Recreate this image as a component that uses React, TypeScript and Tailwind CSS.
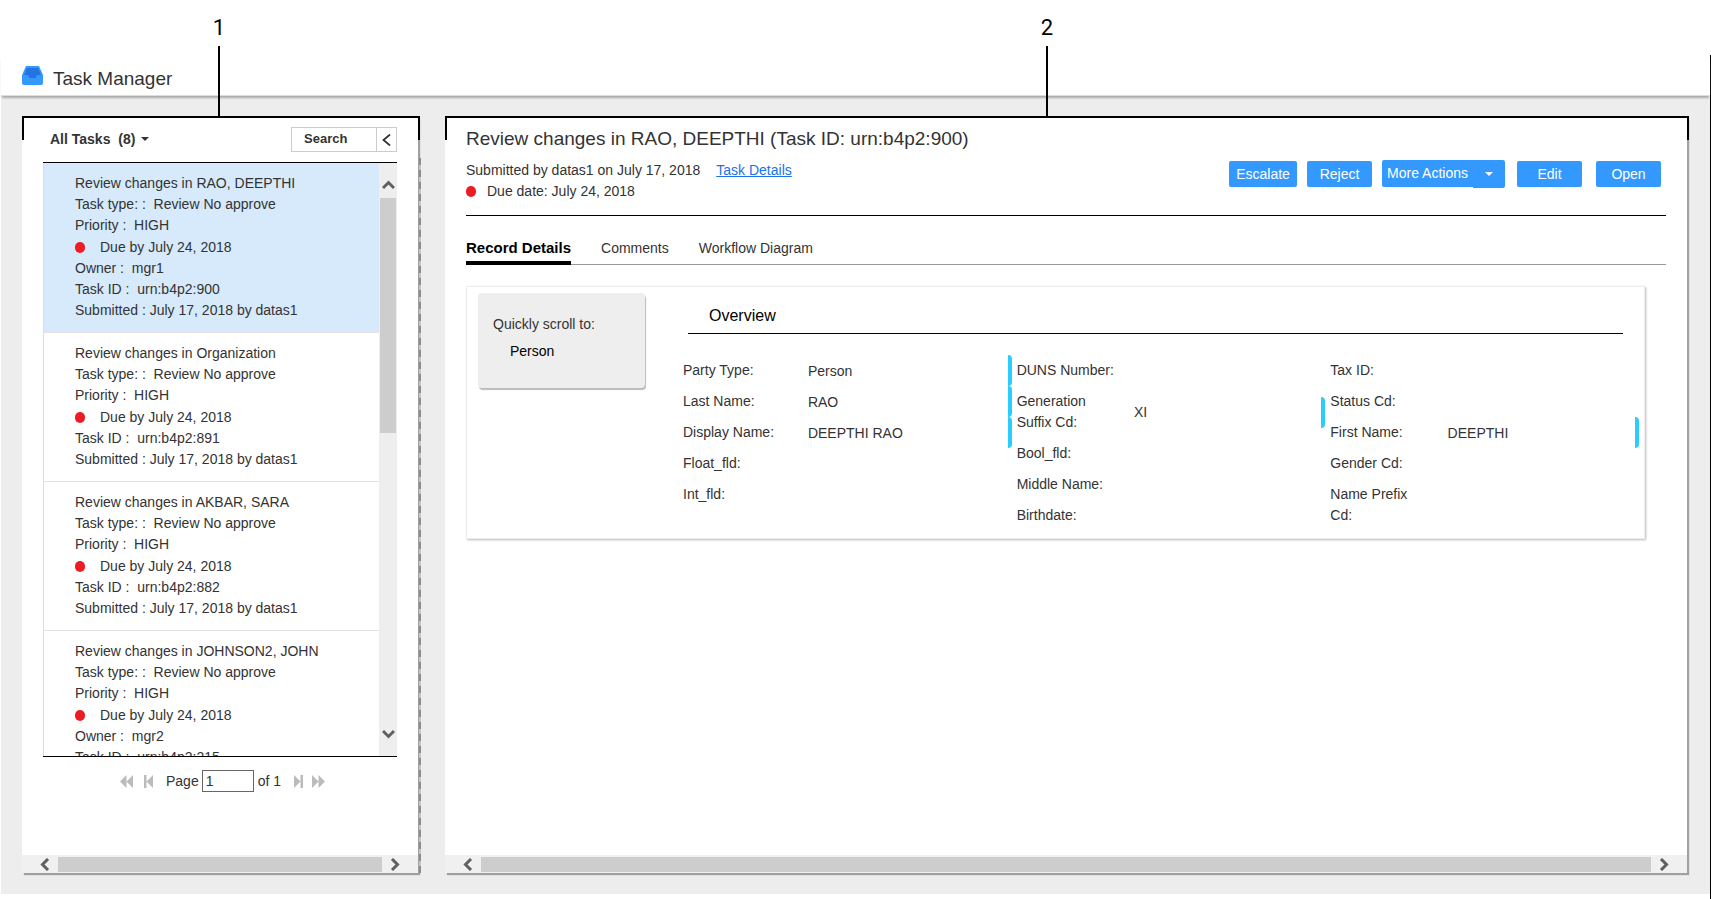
import type { ReactNode } from 'react';

type Task = {
  title: string;
  owner?: string;
  id: string;
  submitted?: string;
};

const tasks: Task[] = [
  { title: 'RAO, DEEPTHI', owner: 'mgr1', id: 'urn:b4p2:900', submitted: 'July 17, 2018 by datas1' },
  { title: 'Organization', id: 'urn:b4p2:891', submitted: 'July 17, 2018 by datas1' },
  { title: 'AKBAR, SARA', id: 'urn:b4p2:882', submitted: 'July 17, 2018 by datas1' },
  { title: 'JOHNSON2, JOHN', owner: 'mgr2', id: 'urn:b4p2:215' },
];

type Field = {
  label: string;
  value?: string;
  changed?: boolean;
};

const columns: Field[][] = [
  [
    { label: 'Party Type:', value: 'Person', changed: true },
    { label: 'Last Name:', value: 'RAO', changed: true },
    { label: 'Display Name:', value: 'DEEPTHI RAO', changed: true },
    { label: 'Float_fld:' },
    { label: 'Int_fld:' },
  ],
  [
    { label: 'DUNS Number:' },
    { label: 'Generation Suffix Cd:', value: 'XI', changed: true },
    { label: 'Bool_fld:' },
    { label: 'Middle Name:' },
    { label: 'Birthdate:' },
  ],
  [
    { label: 'Tax ID:' },
    { label: 'Status Cd:' },
    { label: 'First Name:', value: 'DEEPTHI', changed: true },
    { label: 'Gender Cd:' },
    { label: 'Name Prefix Cd:' },
  ],
];

const chevrons = {
  up: 'M1 9 L6.5 3.5 L12 9',
  down: 'M1 4 L6.5 9.5 L12 4',
  left: 'M9 1 L3.5 6.5 L9 12',
  right: 'M4 1 L9.5 6.5 L4 12',
};

function Chevron({ dir }: { dir: keyof typeof chevrons }) {
  return (
    <svg className="w-[13px] h-[13px] shrink-0" viewBox="0 0 13 13" aria-hidden="true">
      <path d={chevrons[dir]} fill="none" stroke="#606060" strokeWidth="3" />
    </svg>
  );
}

function Caret() {
  return (
    <svg className="w-2 h-1" viewBox="0 0 8 4" aria-hidden="true">
      <path d="M0 0H8L4 4Z" fill="currentColor" />
    </svg>
  );
}

function Dot() {
  return <span className="w-[10px] h-[11px] shrink-0 rounded-full bg-[#ed1c24]" />;
}

function HorizontalScrollbar() {
  return (
    <div className="flex items-center h-[18px] px-[17px] bg-[#f0f0f0]">
      <Chevron dir="left" />
      <div className="flex-1 h-[15px] mx-1.5 bg-[#cdcdcd]" />
      <Chevron dir="right" />
    </div>
  );
}

function PagerButton({ label, path }: { label: string; path: string }) {
  return (
    <button type="button" aria-label={label} className="w-[13px] h-[13px]">
      <svg viewBox="0 0 13 13" className="w-full h-full" aria-hidden="true">
        <path d={path} fill="#bbb" />
      </svg>
    </button>
  );
}

// Numbered bracket drawn over the top edge of a panel
function Callout({ number, stem }: { number: number; stem: string }) {
  return (
    <div className="absolute left-0 -right-[2px] -top-[2px] h-6 border-2 border-b-0 border-black pointer-events-none">
      <div className={`absolute bottom-full flex flex-col items-center w-5 -ml-2.5 ${stem}`}>
        <span className="font-[Roboto,sans-serif] text-[22px] leading-6 text-black">{number}</span>
        <span className="w-[2px] h-[72px] mt-1.5 bg-black" />
      </div>
    </div>
  );
}

function TaskItem({ task, selected }: { task: Task; selected: boolean }) {
  return (
    <li
      className={`pt-[10px] pb-[11px] pl-[31px] border-b border-[#e2e2e2] leading-[21px] whitespace-pre ${selected ? 'bg-[#d6eafb]' : ''}`}>
      <p>Review changes in {task.title}</p>
      <p>{'Task type: :  Review No approve'}</p>
      <p>{'Priority :  HIGH'}</p>
      <p className="flex items-center gap-[15px] h-[22px]">
        <Dot />
        Due by July 24, 2018
      </p>
      {task.owner && <p>{`Owner :  ${task.owner}`}</p>}
      <p>{`Task ID :  ${task.id}`}</p>
      {task.submitted && <p>Submitted : {task.submitted}</p>}
    </li>
  );
}

function TaskList() {
  return (
    <aside className="relative flex flex-col w-[396px] shrink-0 bg-white shadow-[2px_2px_1px_#a0a0a0]">
      <div className="absolute top-10 bottom-0 -right-[3px] w-[2px] bg-[repeating-linear-gradient(#8c8c8c_0_7px,#c4c4c4_7px_12px)]" />
      <Callout number={1} stem="left-[195px]" />
      <div className="flex items-start justify-between h-11 pt-[9px] pl-7 pr-[21px] font-bold">
        <button type="button" className="flex items-center gap-1.5 h-6 whitespace-pre">
          {'All Tasks  (8)'}
          <Caret />
        </button>
        <div className="flex h-[25px] border border-[#ccc] text-[13px]">
          <button type="button" className="w-[84px] pl-3 text-left">Search</button>
          <button
            type="button"
            aria-label="Collapse search"
            className="flex items-center justify-center w-5 border-l border-[#ccc]">
            <svg className="w-[9px] h-3" viewBox="0 0 9 12" aria-hidden="true">
              <path d="M8 0.5L1.5 6L8 11.5" fill="none" stroke="#333" strokeWidth="1.8" />
            </svg>
          </button>
        </div>
      </div>

      <div className="flex h-[595px] mx-[21px] border-y border-black">
        <ul className="flex-1 overflow-hidden border-l border-[#ddd]">
          {tasks.map((task, i) =>
            <TaskItem key={task.id} task={task} selected={i === 0} />
          )}
        </ul>
        <div className="flex flex-col items-center w-[18px] py-4 bg-[#eee]">
          <Chevron dir="up" />
          <div className="w-4 h-[235px] mt-1.5 mb-auto bg-[#cdcdcd]" />
          <Chevron dir="down" />
        </div>
      </div>

      <div className="flex items-center h-6 mt-3 pl-[98px]">
        <PagerButton label="First page" path="M6.5 0V13L0 6.5ZM13 0V13L6.5 6.5Z" />
        <div className="flex ml-[10px]">
          <PagerButton label="Previous page" path="M1 0H3.5V13H1ZM10 0V13L3.5 6.5Z" />
        </div>
        <label htmlFor="page" className="ml-[10px]">Page</label>
        <input
          id="page"
          defaultValue="1"
          className="w-[52px] h-[22px] ml-[3px] px-[3px] border border-[#666] bg-white" />
        <span className="ml-1">of 1</span>
        <div className="flex gap-2 ml-[10px]">
          <PagerButton label="Next page" path="M3 0L9.5 6.5L3 13ZM9.5 0H12V13H9.5Z" />
          <PagerButton label="Last page" path="M0 0L6.5 6.5L0 13ZM6.5 0L13 6.5L6.5 13Z" />
        </div>
      </div>

      <div className="mt-auto">
        <HorizontalScrollbar />
      </div>
    </aside>
  );
}

function Action({ children, width }: { children: ReactNode; width: string }) {
  return (
    <button type="button" className={`h-[26px] rounded-[2px] bg-[#39f] text-white ${width}`}>
      {children}
    </button>
  );
}

function FieldRow({ field }: { field: Field }) {
  return (
    <div className="flex items-center py-[5px]">
      <dt className="w-[38%] shrink-0 pr-4 leading-[21px]">{field.label}</dt>
      <dd
        className={`flex flex-1 items-center h-[31px] -my-[5px] ${field.changed ? 'border-r-4 border-[#29cdff] rounded-r-[4px]' : ''}`}>
        {field.value}
      </dd>
    </div>
  );
}

function TaskView() {
  return (
    <section className="relative flex flex-col flex-1 bg-white shadow-[2px_2px_1px_#a0a0a0]">
      <Callout number={2} stem="left-[600px]" />
      <div className="pt-[9px] px-[21px]">
        <header className="flex justify-between h-[89px] border-b border-black">
          <div>
            <h2 className="text-[19px] leading-6">Review changes in RAO, DEEPTHI (Task ID: urn:b4p2:900)</h2>
            <p className="mt-[9px] leading-[21px]">
              Submitted by datas1 on July 17, 2018
              <a href="#details" className="ml-4 text-[#1a73e8] underline">Task Details</a>
            </p>
            <p className="flex items-center gap-[11px] leading-[21px]">
              <Dot />
              Due date: July 24, 2018
            </p>
          </div>
          <div className="flex items-center h-7 mt-[33px] pr-[5px]">
            <div className="flex gap-[10px]">
              <Action width="w-[68px]">Escalate</Action>
              <Action width="w-[65px]">Reject</Action>
            </div>
            <button type="button" className="flex items-start h-7 ml-[10px] text-white">
              <span className="w-[91px] h-[27px] rounded-l-[2px] bg-[#39f] leading-[26px]">More Actions</span>
              <span className="flex items-center justify-center w-8 h-7 rounded-r-[2px] bg-[#39f]">
                <Caret />
              </span>
            </button>
            <div className="flex gap-[14px] ml-3">
              <Action width="w-[65px]">Edit</Action>
              <Action width="w-[65px]">Open</Action>
            </div>
          </div>
        </header>

        <nav className="flex gap-[30px] h-[49px] pt-5 border-b border-[#999] leading-6">
          <a href="#record" className="h-[29px] border-b-4 border-black font-bold text-[15px] text-black">Record Details</a>
          <a href="#comments">Comments</a>
          <a href="#workflow">Workflow Diagram</a>
        </nav>

        <div className="flex items-start mt-[21px] mr-[21px] pt-[6px] pl-[11px] pb-[7px] border border-[#eee] shadow-[1px_1px_2px_#bbb]">
          <div className="w-[167px] h-[95px] shrink-0 pt-[18px] pl-[15px] rounded-[4px] bg-[#eee] shadow-[1px_2px_1px_#bbb]">
            <p className="leading-[27px]">Quickly scroll to:</p>
            <a href="#person" className="block pl-[17px] text-black leading-[27px]">Person</a>
          </div>
          <div className="flex-1 pl-[38px] pr-[5px]">
            <h3 className="h-[41px] ml-[5px] mr-4 pt-[11px] pl-[21px] border-b border-black text-base text-black leading-6">
              Overview
            </h3>
            <div className="grid grid-cols-[329fr_309fr_309fr] gap-x-[5px] mt-[21px]">
              {columns.map((fields, i) =>
                <dl key={i}>
                  {fields.map((field) =>
                    <FieldRow key={field.label} field={field} />
                  )}
                </dl>
              )}
            </div>
          </div>
        </div>
      </div>

      <div className="mt-auto">
        <HorizontalScrollbar />
      </div>
    </section>
  );
}

export default function App() {
  return (
    <div className="flex flex-col min-h-screen pt-[55px] bg-white font-['Liberation_Sans',Arial,sans-serif] text-sm text-[#333]">
      <div className="flex flex-col flex-1 pb-[5px] pl-px border-r border-black">
        <header className="relative flex items-center h-[41px] pl-[21px] gap-[10px] border-b border-[#ddd] shadow-[0_3px_2px_-1px_#aaa]">
          <svg className="w-[21px] h-[19px]" viewBox="0 0 21 19" aria-hidden="true">
            <path d="M4 0H17L21 9V17Q21 19 19 19H2Q0 19 0 17V9Z" fill="#39f" />
            <path d="M5 2H16L19 9H15L13.5 12H7.500L6 9H2Z" fill="#2374e1" />
          </svg>
          <h1 className="pt-2 text-[19px] leading-6">Task Manager</h1>
        </header>
        <main className="flex flex-1 gap-[27px] pt-[22px] pb-[21px] pl-[21px] pr-[23px] bg-[#ededed]">
          <TaskList />
          <TaskView />
        </main>
      </div>
    </div>
  );
}
